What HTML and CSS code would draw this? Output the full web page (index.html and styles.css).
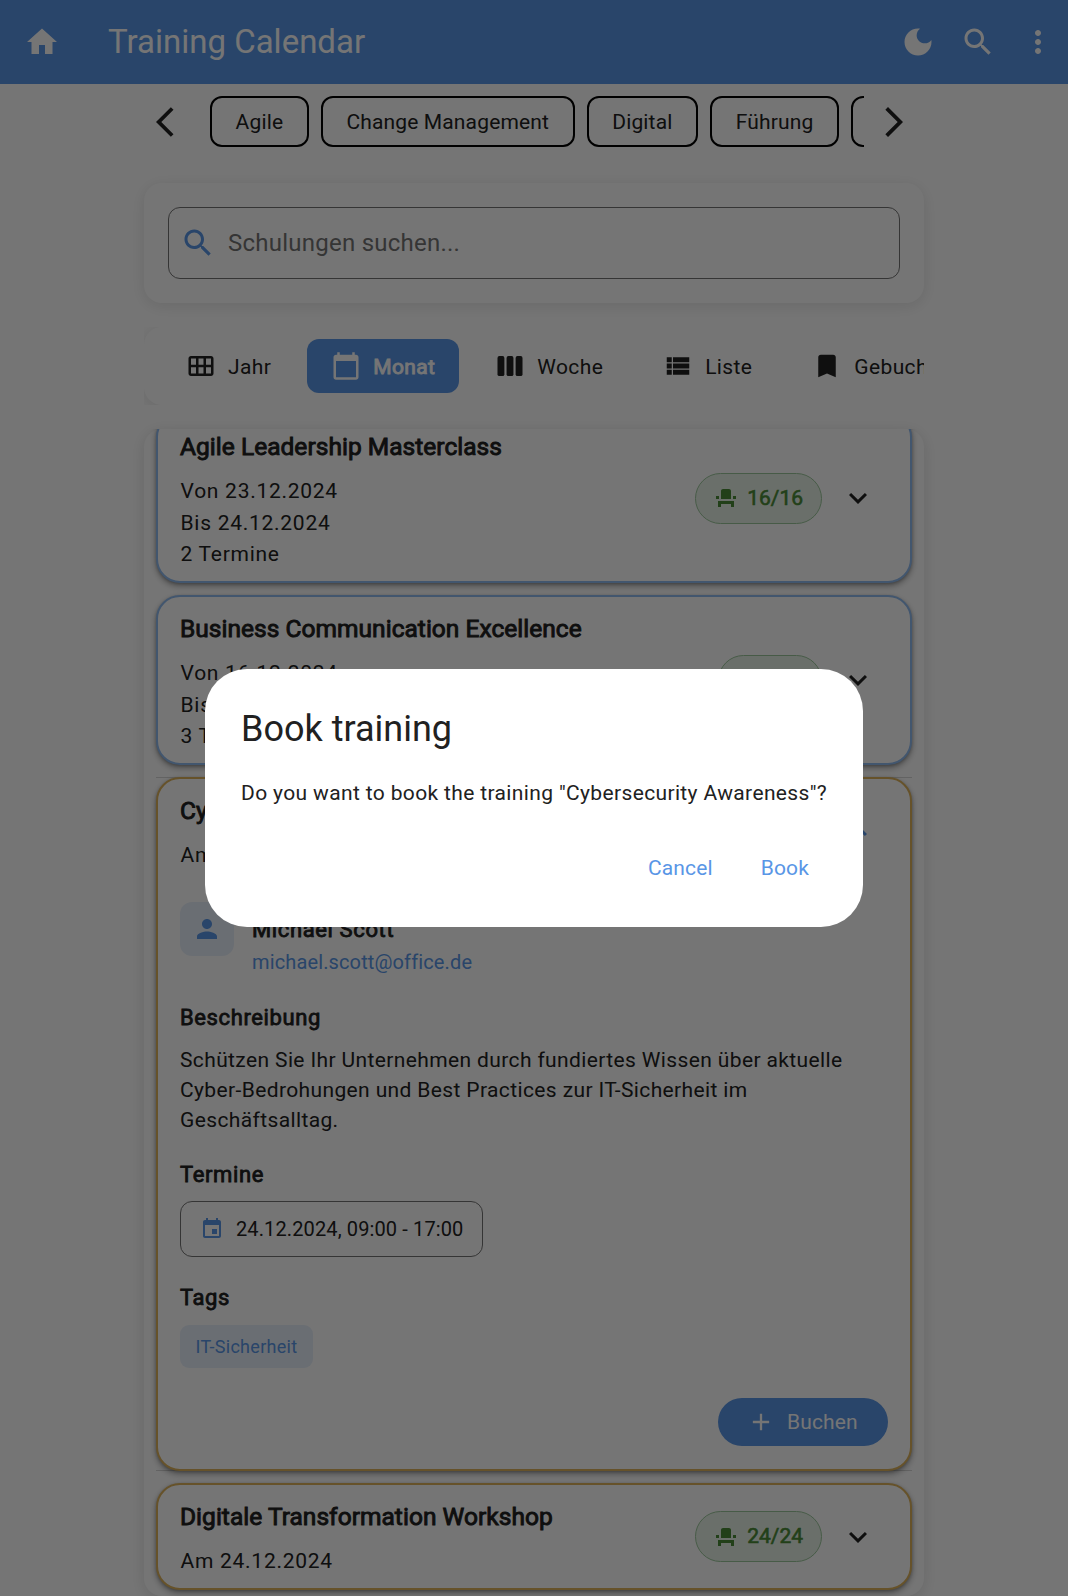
FILE: index.html
```html
<!DOCTYPE html>
<html lang="de">
<head>
<meta charset="utf-8">
<title>Training Calendar</title>
<link rel="stylesheet" href="styles.css">
</head>
<body>
<svg class="defs" aria-hidden="true">
  <symbol id="search" viewBox="0 0 24 24"><path d="M15.5 14h-.79l-.28-.27C15.41 12.59 16 11.11 16 9.5 16 5.91 13.09 3 9.5 3S3 5.91 3 9.5 5.91 16 9.5 16c1.61 0 3.09-.59 4.23-1.57l.27.28v.79l5 4.99L20.49 19l-4.99-5zm-6 0C7.01 14 5 11.99 5 9.5S7.01 5 9.5 5 14 7.01 14 9.5 11.99 14 9.5 14z"/></symbol>
  <symbol id="seat" viewBox="0 0 24 24"><path d="M4 18v3h3v-3h10v3h3v-6H4zm15-8h3v3h-3zM2 10h3v3H2zm15 3H7V5c0-1.1.9-2 2-2h6c1.1 0 2 .9 2 2v8z"/></symbol>
  <symbol id="more" viewBox="0 0 24 24"><path d="M16.59 8.59 12 13.17 7.41 8.59 6 10l6 6 6-6z"/></symbol>
</svg>

<header class="appbar">
  <svg class="i36" viewBox="0 0 24 24"><path d="M10 20v-6h4v6h5v-8h3L12 3 2 12h3v8z"/></svg>
  <h1>Training Calendar</h1>
  <div class="actions">
    <svg class="i36" viewBox="0 0 24 24"><path d="M12 3c-4.97 0-9 4.03-9 9s4.03 9 9 9 9-4.03 9-9c0-.46-.04-.92-.1-1.36-.98 1.37-2.58 2.26-4.4 2.26-2.98 0-5.4-2.42-5.4-5.4 0-1.81.89-3.42 2.26-4.4C12.92 3.04 12.46 3 12 3z"/></svg>
    <svg class="i36"><use href="#search"/></svg>
    <svg class="i36" viewBox="0 0 24 24"><path d="M12 8c1.1 0 2-.9 2-2s-.9-2-2-2-2 .9-2 2 .9 2 2 2zm0 2c-1.1 0-2 .9-2 2s.9 2 2 2 2-.9 2-2-.9-2-2-2zm0 6c-1.1 0-2 .9-2 2s.9 2 2 2 2-.9 2-2-.9-2-2-2z"/></svg>
  </div>
</header>

<main class="page">
  <nav class="filters">
    <svg class="i36" viewBox="0 0 24 24"><path d="M11.67 3.87 9.9 2.1 0 12l9.9 9.9 1.77-1.77L3.54 12z"/></svg>
    <div class="chips">
      <span class="chip">Agile</span>
      <span class="chip">Change Management</span>
      <span class="chip">Digital</span>
      <span class="chip">Führung</span>
      <span class="chip">IT-Sicherheit</span>
    </div>
    <svg class="i36" viewBox="0 0 24 24"><path d="M6.23 20.23 8 22l10-10L8 2 6.23 3.77 14.46 12z"/></svg>
  </nav>

  <section class="searchbox">
    <div class="field">
      <svg class="i36 blue"><use href="#search"/></svg>
      <span>Schulungen suchen...</span>
    </div>
  </section>

  <div class="tabclip">
    <div class="tabs">
      <div class="tab"><svg class="i30" viewBox="0 0 24 24"><path d="M20 4H4c-1.1 0-2 .9-2 2v12c0 1.1.9 2 2 2h16c1.1 0 2-.9 2-2V6c0-1.1-.9-2-2-2zM8 11H4V6h4v5zm6 0h-4V6h4v5zm6 0h-4V6h4v5zM8 18H4v-5h4v5zm6 0h-4v-5h4v5zm6 0h-4v-5h4v5z"/></svg><span>Jahr</span></div>
      <div class="tab active"><svg class="i30" viewBox="0 0 24 24"><path d="M20 3h-1V1h-2v2H7V1H5v2H4c-1.1 0-2 .9-2 2v16c0 1.1.9 2 2 2h16c1.1 0 2-.9 2-2V5c0-1.1-.9-2-2-2zm0 18H4V8h16v13z"/></svg><span>Monat</span></div>
      <div class="tab"><svg class="i30" viewBox="0 0 24 24"><rect x="2" y="4" width="5.5" height="16" rx="1.5"/><rect x="9.25" y="4" width="5.5" height="16" rx="1.5"/><rect x="16.5" y="4" width="5.5" height="16" rx="1.5"/></svg><span>Woche</span></div>
      <div class="tab"><svg class="i30" viewBox="0 0 24 24"><path d="M3 14h4v-4H3v4zm0 5h4v-4H3v4zM3 9h4V5H3v4zm5 5h13v-4H8v4zm0 5h13v-4H8v4zM8 5v4h13V5H8z"/></svg><span>Liste</span></div>
      <div class="tab"><svg class="i30" viewBox="0 0 24 24"><path d="M17 3H7c-1.1 0-1.99.9-1.99 2L5 21l7-3 7 3V5c0-1.1-.9-2-2-2z"/></svg><span>Gebucht</span></div>
    </div>
  </div>

  <div class="listwrap">
    <div class="list">
      <article class="card blueline">
        <div class="head">
          <div class="info"><h2>Agile Leadership Masterclass</h2><p>Von 23.12.2024</p><p>Bis 24.12.2024</p><p>2 Termine</p></div>
          <span class="seats"><svg class="i24"><use href="#seat"/></svg>16/16</span>
          <svg class="i36"><use href="#more"/></svg>
        </div>
      </article>
      <article class="card blueline">
        <div class="head">
          <div class="info"><h2>Business Communication Excellence</h2><p>Von 16.12.2024</p><p>Bis 18.12.2024</p><p>3 Termine</p></div>
          <span class="seats"><svg class="i24"><use href="#seat"/></svg>8/8</span>
          <svg class="i36"><use href="#more"/></svg>
        </div>
      </article>
      <div class="divided">
        <article class="card amberline open">
          <div class="head">
            <div class="info"><h2>Cybersecurity Awareness</h2><p>Am 24.12.2024</p></div>
            <span class="seats"><svg class="i24"><use href="#seat"/></svg>20/20</span>
            <svg class="i36 blue" viewBox="0 0 24 24"><path d="m12 8-6 6 1.41 1.41L12 10.83l4.59 4.58L18 14z"/></svg>
          </div>
          <div class="body">
            <div class="trainer">
              <span class="avatar"><svg class="i30" viewBox="0 0 24 24"><path d="M12 12c2.21 0 4-1.79 4-4s-1.79-4-4-4-4 1.79-4 4 1.79 4 4 4zm0 2c-2.67 0-8 1.34-8 4v2h16v-2c0-2.66-5.33-4-8-4z"/></svg></span>
              <div class="contact"><h3>Michael Scott</h3><p class="mail">michael.scott@office.de</p></div>
            </div>
            <h3>Beschreibung</h3>
            <p class="desc">Schützen Sie Ihr Unternehmen durch fundiertes Wissen über aktuelle Cyber-Bedrohungen und Best Practices zur IT-Sicherheit im Geschäftsalltag.</p>
            <h3>Termine</h3>
            <div class="date"><svg class="i24 blue" viewBox="0 0 24 24"><path d="M17 12h-5v5h5v-5zM16 1v2H8V1H6v2H5c-1.11 0-1.99.9-1.99 2L3 19c0 1.1.89 2 2 2h14c1.1 0 2-.9 2-2V5c0-1.1-.9-2-2-2h-1V1h-2zm3 18H5V8h14v11z"/></svg>24.12.2024, 09:00 - 17:00</div>
            <h3>Tags</h3>
            <span class="tag">IT-Sicherheit</span>
            <button class="book"><svg viewBox="0 0 24 24"><path d="M19 13h-6v6h-2v-6H5v-2h6V5h2v6h6v2z"/></svg>Buchen</button>
          </div>
        </article>
      </div>
      <article class="card amberline">
        <div class="head">
          <div class="info"><h2>Digitale Transformation Workshop</h2><p>Am 24.12.2024</p></div>
          <span class="seats"><svg class="i24"><use href="#seat"/></svg>24/24</span>
          <svg class="i36"><use href="#more"/></svg>
        </div>
      </article>
    </div>
  </div>
</main>

<div class="scrim">
  <div class="dialog" role="dialog">
    <h2>Book training</h2>
    <p>Do you want to book the training "Cybersecurity Awareness"?</p>
    <div class="buttons"><span>Cancel</span><span>Book</span></div>
  </div>
</div>
</body>
</html>
```
FILE: styles.css
```css
* { box-sizing: border-box; margin: 0; padding: 0; }
:root { --blue: #5996e6; --ink: #212121; }
body {
  height: 1596px;
  overflow: hidden;
  background: #fff;
  color: var(--ink);
  font-family: Roboto, sans-serif;
  font-size: 21px;
}
svg { display: block; flex: none; fill: currentColor; }
.defs { position: absolute; width: 0; height: 0; }
.i24 { width: 24px; height: 24px; }
.i30 { width: 30px; height: 30px; }
.i36 { width: 36px; height: 36px; }
.blue { color: var(--blue); }

.appbar {
  display: flex;
  align-items: center;
  height: 84px;
  padding: 0 12px 0 24px;
  background: var(--blue);
  color: #fff;
}
.appbar h1 { margin-left: 48px; font-size: 33px; font-weight: 400; line-height: 84px; }
.actions { display: flex; gap: 24px; margin-left: auto; }

.page { width: 780px; margin: 0 auto; }
.filters { display: flex; align-items: center; height: 75px; padding: 0 12px; }
.chips { display: flex; flex: 1; gap: 12px; margin: 0 12px; padding-left: 6px; overflow: hidden; }
.chip {
  flex: none;
  height: 51px;
  padding: 0 23.6px;
  border: 2px solid #000;
  border-radius: 12px;
  line-height: 49px;
  letter-spacing: .15px;
}

.searchbox {
  height: 120px;
  margin-top: 24px;
  padding: 24px;
  border-radius: 18px;
  background: #fff;
  box-shadow: 0 3px 15px rgba(0, 0, 0, .1);
}
.field {
  display: flex;
  align-items: center;
  gap: 12px;
  height: 72px;
  padding-left: 11px;
  border: 1px solid #757575;
  border-radius: 12px;
  color: #757575;
  font-size: 24px;
  letter-spacing: .24px;
}

.tabclip { height: 78px; margin-top: 24px; overflow: hidden; }
.tabs {
  display: flex;
  gap: 12px;
  width: 900px;
  padding: 12px 18px;
  border-radius: 18px;
  background: #fff;
  box-shadow: 0 3px 15px rgba(0, 0, 0, .1);
}
.tab {
  display: flex;
  align-items: center;
  gap: 12px;
  height: 54px;
  padding: 0 24px;
  border-radius: 12px;
  letter-spacing: .375px;
}
.tab span { line-height: 28px; padding-top: 2px; }
.tab.active { background: var(--blue); color: #fff; -webkit-text-stroke: .9px; }
.tab svg { -webkit-text-stroke: 0; }

.listwrap {
  height: 1167px;
  margin-top: 24px;
  border-radius: 18px;
  background: #fff;
  box-shadow: 0 3px 15px rgba(0, 0, 0, .12);
}
.list {
  display: flex;
  flex-direction: column;
  gap: 12px;
  height: 1167px;
  padding: 0 12px;
  overflow: hidden;
}
.list > :first-child { margin-top: -16px; }
.card {
  position: relative;
  flex: none;
  border: 2px solid;
  border-radius: 24px;
  background: #fff;
  box-shadow: 0 3px 6px rgba(0, 0, 0, .35), 0 1px 3px rgba(0, 0, 0, .2);
}
.blueline { border-color: #90bbf0; }
.amberline { border-color: #dfb45c; }
.head { display: flex; align-items: center; padding: 0 34px 0 22px; }
.info { flex: 1; padding: 17px 0 10.5px; }
.info h2 {
  height: 30px;
  margin-bottom: 14px;
  font-size: 24.5px;
  font-weight: 400;
  line-height: 30px;
  letter-spacing: .03px;
  -webkit-text-stroke: .9px;
  white-space: nowrap;
}
.info p { height: 31.5px; padding-left: .5px; line-height: 31px; letter-spacing: .73px; }
.seats {
  display: flex;
  align-items: center;
  gap: 9.5px;
  height: 51px;
  margin-right: 18px;
  padding: 0 18px 1px;
  border: 1px solid #9bc79b;
  border-radius: 26px;
  background: #e8f2e8;
  color: #4b8c37;
  -webkit-text-stroke: .6px;
}
.seats svg { margin-top: 1px; -webkit-text-stroke: 0; }

.divided { flex: none; border: solid #d8d8d8; border-width: 1px 0; }
.divided .card { height: 694px; margin: -1px 0; }
.body { padding: 20px 22px 22px; }
h3 { font-size: 22px; font-weight: 400; line-height: 30px; letter-spacing: .62px; -webkit-text-stroke: .8px; }
.trainer { display: flex; align-items: flex-start; gap: 18px; margin-bottom: 24px; }
.contact { padding-top: 13px; }
.avatar {
  display: grid;
  place-items: center;
  width: 54px;
  height: 54px;
  border-radius: 12px;
  background: #e8f0fa;
  color: var(--blue);
}
.mail { color: var(--blue); font-size: 20px; line-height: 34px; letter-spacing: .13px; }
.desc { margin: 12px 0 24.5px; line-height: 30px; letter-spacing: .375px; }
.date {
  display: flex;
  align-items: center;
  gap: 12.5px;
  width: 303px;
  height: 56px;
  margin: 11px 0 26px;
  padding-left: 18.5px;
  border: 1px solid #757575;
  border-radius: 12px;
  font-size: 20px;
  letter-spacing: .12px;
  white-space: nowrap;
}
.tag {
  display: block;
  width: 133px;
  height: 43px;
  margin-top: 12px;
  border-radius: 9px;
  background: #e8f0fa;
  color: var(--blue);
  font-size: 18px;
  line-height: 44px;
  letter-spacing: .3px;
  text-align: center;
}
.book {
  display: flex;
  align-items: center;
  gap: 12px;
  width: 170px;
  height: 48px;
  margin: 30px 0 0 auto;
  padding: 1px 29px 0;
  border: 0;
  border-radius: 24px;
  background: var(--blue);
  color: #fff;
  font: 21px Roboto, sans-serif;
  letter-spacing: .15px;
}
.book svg { width: 28px; height: 28px; }

.scrim {
  position: fixed;
  inset: 0;
  display: grid;
  place-items: center;
  background: rgba(0, 0, 0, .54);
}
.dialog {
  width: 658px;
  height: 258px;
  padding: 36px;
  border-radius: 42px;
  background: #fff;
}
.dialog h2 { font-size: 36px; font-weight: 400; line-height: 48px; }
.dialog p { margin-top: 25px; line-height: 30px; letter-spacing: .36px; white-space: nowrap; }
.buttons {
  display: flex;
  justify-content: flex-end;
  gap: 48px;
  margin-top: 45px;
  padding-right: 18px;
  color: var(--blue);
  line-height: 30px;
  letter-spacing: .15px;
}
```
